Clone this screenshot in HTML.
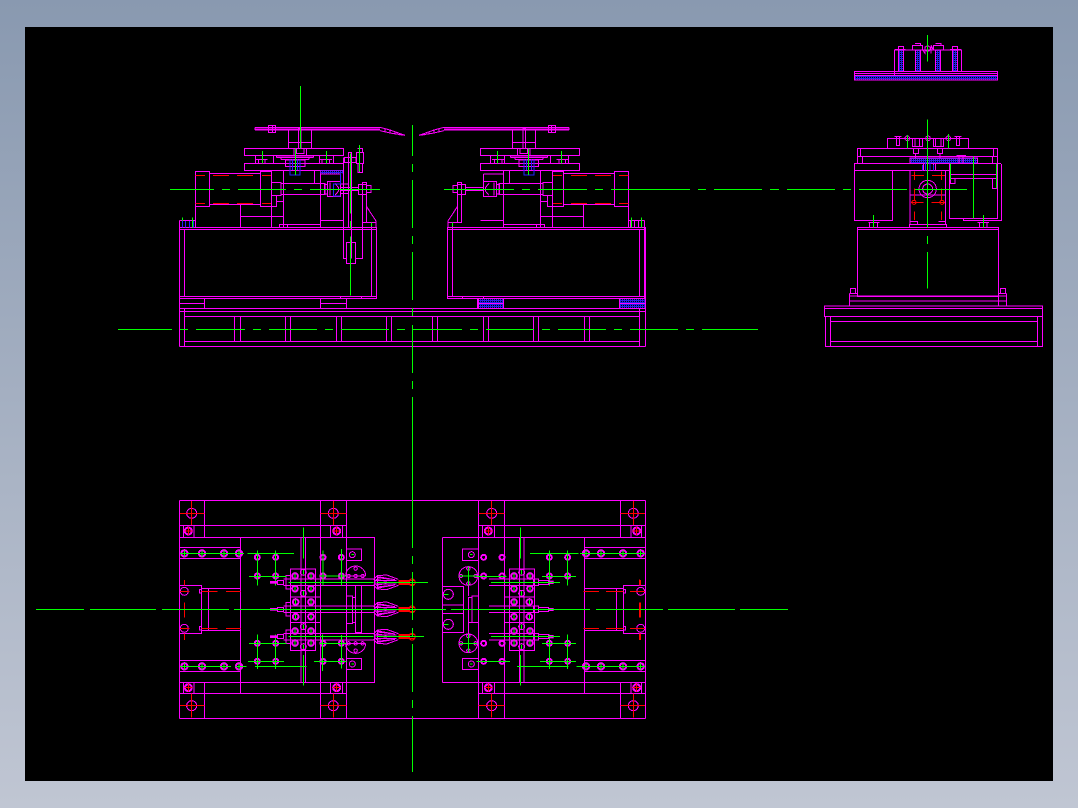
<!DOCTYPE html>
<html lang="en">
<head>
<meta charset="utf-8">
<title>CAD drawing</title>
<style>
html,body{margin:0;padding:0;width:1078px;height:808px;overflow:hidden;background:linear-gradient(180deg,#8999b0 0%,#c0c6d3 100%)}
#v{position:absolute;left:25px;top:27px;width:1028px;height:754px;background:#000}
svg{position:absolute;left:0;top:0;display:block}
svg *{vector-effect:non-scaling-stroke}
.m,.m *{stroke:#f0f;stroke-width:1;fill:none;shape-rendering:crispEdges}
.g,.g *{stroke:#0f0;stroke-width:1;fill:none;shape-rendering:crispEdges}
.r,.r *{stroke:#f00;stroke-width:1;fill:none;shape-rendering:crispEdges}
.b,.b *{stroke:#22f;stroke-width:1;fill:none;shape-rendering:crispEdges}
.h{fill:url(#ht);stroke:none;shape-rendering:crispEdges}
</style>
</head>
<body>
<div id="v"></div>
<svg width="1078" height="808" viewBox="0 0 1078 808" xmlns="http://www.w3.org/2000/svg">
<defs>
<pattern id="ht" width="6" height="6" patternUnits="userSpaceOnUse">
<rect width="6" height="6" fill="#2222e6"/><rect x="3" y="3" width="3" height="3" fill="#000"/>
</pattern>

<!-- shared side elevation, drawn in crop coordinates -->
<g id="side">
<path class="m" d="M255 52H630M255 60H630M255 57H630M255 52V60M630 52L660 60L705 76M630 62L665 70L705 76M645 55V67M660 60V71M675 66V74M690 70V76
M296 46H316V68H296ZM307 46V68M296 52H316M296 60H316
M355 60V115M425 60V115M355 97H425M385 52V115M393 52V115M385 55H395
M223 115H521V136H223ZM380 115V130H402V115M410 115V136M372 115V136
M256 136V160M310 136V160M448 136V160M490 136V160M258 149H292M450 149H486M265 149V160M285 149V160M456 149V160M478 149V160
M319 138H431M319 143H431M333 149H417M319 138V143M431 138V143M333 143V149M417 143V149
M346 150H405V170H346Z
M223 160H521V182H223Z
M76 184H119V290H76ZM119 190H271V284H119ZM271 184H305V290H271ZM76 290V352M211 284V352M305 182V352M211 320H340M305 290H320V257M320 275H340M305 217H333V257H305ZM333 220H465V254H333Z
M340 182V352M433 182V220M451 182V352M340 254V343M328 343H451V352H328ZM352 343V352M451 331H520M451 192H512M512 192V214
M472 214H512V260H472ZM480 217V257M495 220L505 232V244L495 256M463 224H472V252H463Z
M577 217H589V338H577ZM565 223H590V253H565ZM590 226H603V248H590ZM512 232H565M512 241H565
M590 290L618 333V352M578 337H620
M28 331H76M28 331V352M37 331V352M47 331V352M58 331V352M70 331V352
M28 352H620V566H28ZM28 358H620M28 560H620M44 358V560M604 337V560M511 560V566M575 560V566
M28 566V595M104 566V595M28 580H104M451 566V595M530 566V595M451 580H530"/>
<path class="r" d="M76 196H105M129 196H177M201 196H249M276 196H303M76 281H105M129 281H177M201 281H249M276 281H303"/>
<path class="b" d="M360 148V195H390V148M367 148V180M382 148V180"/>
<path class="g" d="M377 115V195M277 123V160M469 123V160M37 322V352M67 322V352M604 337V350"/>
</g>

<!-- shared plan frame -->
<g id="plan">
<path class="m" d="M28 16H750M28 670H750M28 16V670M28 91H530M28 595H530M28 127H530M28 562H530
M104 16V127M104 562V670M451 16V670M530 16V670M211 127V595
M40 91H72V127H40ZM481 91H518V127H481ZM40 562H72V595H40ZM481 562H518V595H481Z
M28 158H211M28 190H211M28 497H211M28 530H211
M28 271H95V416H28ZM95 280H211M95 406H211M115 280V406M88 284H95V294H88ZM88 395H95V405H88Z
M361 222H437V466H361ZM361 262H437M361 306H452M361 383H452M361 424H437M393 127V562M407 127V562"/>
<g class="m">
<circle cx="65" cy="55" r="15"/><circle cx="490" cy="55" r="15"/><circle cx="65" cy="632" r="15"/><circle cx="490" cy="632" r="15"/>
<circle cx="55" cy="108" r="12"/><circle cx="500" cy="108" r="12"/><circle cx="55" cy="578" r="12"/><circle cx="500" cy="578" r="12"/>
<circle cx="55" cy="108" r="9"/><circle cx="500" cy="108" r="9"/><circle cx="55" cy="578" r="9"/><circle cx="500" cy="578" r="9"/>
<circle cx="43" cy="175" r="11"/><circle cx="96" cy="175" r="11"/><circle cx="162" cy="175" r="11"/><circle cx="207" cy="175" r="11"/>
<circle cx="43" cy="514" r="11"/><circle cx="96" cy="514" r="11"/><circle cx="162" cy="514" r="11"/><circle cx="207" cy="514" r="11"/>
<circle cx="43" cy="175" r="8"/><circle cx="96" cy="175" r="8"/><circle cx="162" cy="175" r="8"/><circle cx="207" cy="175" r="8"/>
<circle cx="43" cy="514" r="8"/><circle cx="96" cy="514" r="8"/><circle cx="162" cy="514" r="8"/><circle cx="207" cy="514" r="8"/>
<circle cx="43" cy="289" r="12"/><circle cx="43" cy="400" r="12"/>
<circle cx="262" cy="187" r="9"/><circle cx="317" cy="187" r="9"/><circle cx="262" cy="243" r="9"/><circle cx="317" cy="243" r="9"/>
<circle cx="262" cy="445" r="9"/><circle cx="317" cy="445" r="9"/><circle cx="262" cy="499" r="9"/><circle cx="317" cy="499" r="9"/>
<circle cx="459" cy="187" r="9"/><circle cx="514" cy="187" r="9"/><circle cx="459" cy="243" r="9"/><circle cx="514" cy="243" r="9"/>
<circle cx="459" cy="445" r="9"/><circle cx="514" cy="445" r="9"/><circle cx="459" cy="499" r="9"/><circle cx="514" cy="499" r="9"/>
<circle cx="262" cy="187" r="6"/><circle cx="317" cy="187" r="6"/><circle cx="262" cy="243" r="6"/><circle cx="317" cy="243" r="6"/>
<circle cx="262" cy="445" r="6"/><circle cx="317" cy="445" r="6"/><circle cx="262" cy="499" r="6"/><circle cx="317" cy="499" r="6"/>
<circle cx="459" cy="187" r="6"/><circle cx="514" cy="187" r="6"/><circle cx="459" cy="243" r="6"/><circle cx="514" cy="243" r="6"/>
<circle cx="459" cy="445" r="6"/><circle cx="514" cy="445" r="6"/><circle cx="459" cy="499" r="6"/><circle cx="514" cy="499" r="6"/>
<circle cx="375" cy="243" r="10"/><circle cx="423" cy="243" r="10"/><circle cx="375" cy="281" r="10"/><circle cx="423" cy="281" r="10"/>
<circle cx="377" cy="321" r="10"/><circle cx="423" cy="321" r="10"/><circle cx="377" cy="365" r="10"/><circle cx="423" cy="365" r="10"/>
<circle cx="375" cy="408" r="10"/><circle cx="423" cy="408" r="10"/><circle cx="375" cy="444" r="10"/><circle cx="423" cy="444" r="10"/>
<circle cx="375" cy="243" r="7"/><circle cx="423" cy="243" r="7"/><circle cx="375" cy="281" r="7"/><circle cx="423" cy="281" r="7"/>
<circle cx="377" cy="321" r="7"/><circle cx="423" cy="321" r="7"/><circle cx="377" cy="365" r="7"/><circle cx="423" cy="365" r="7"/>
<circle cx="375" cy="408" r="7"/><circle cx="423" cy="408" r="7"/><circle cx="375" cy="444" r="7"/><circle cx="423" cy="444" r="7"/>
<circle cx="400" cy="232" r="9"/><circle cx="400" cy="295" r="9"/><circle cx="400" cy="395" r="9"/><circle cx="400" cy="455" r="9"/>
</g>
<path class="r" d="M30 55H104M65 18V90M451 55H530M490 18V90M30 632H104M65 596V668M451 632H530M490 596V668
M43 108H68M55 96V120M488 108H512M500 96V120M43 578H68M55 566V590M488 578H512M500 566V590
M95 289H143M168 289H211M95 400H143M168 400H211M30 289H58M43 255V272M43 322V368M30 400H58M43 415V435"/>
<path class="g" d="M43 166V184M96 166V184M162 166V184M207 166V184M43 505V523M96 505V523M162 505V523M207 505V523M262 166V272M317 166V272M262 418V522M317 418V522M375 236V250M423 236V250M375 274V288M423 274V288M377 314V328M423 314V328M377 358V372M423 358V372M375 401V415M423 401V415M375 437V451M423 437V451M400 225V239M400 288V302M400 388V402M400 448V462"/>
</g>

<!-- nozzle -->
<g id="noz">
<path d="M300 -4H322V4H300Z" fill="#f0f" stroke="none"/>
<path class="m" d="M610 -8L622 -20L650 -22L685 -9M610 8L622 20L650 22L685 9M622 -14L665 -9M622 14L665 9M622 -17L675 -8M622 17L675 8M618 -9L650 -3M618 9L650 3M612 -5H680M612 5H680M622 -20V20M615 -8V8M340 -10H610M340 10H610M322 -6H340V6H322ZM348 -20H362V20H348Z"/>
<path class="r" d="M685 -6H735M685 6H735M685 -3H720M685 3H720"/>
<g class="r"><circle cx="726" cy="0" r="10"/></g>
<path class="g" d="M620 0H742M355 0H610"/>
</g>
</defs>

<!-- LEFT ELEVATION -->
<g transform="translate(170,110) scale(.33333)">
<use href="#side"/>
<rect class="h" x="451" y="182" width="69" height="9"/>
<path class="m" d="M520 142V445H529M577 338V445H557M529 397H557V461H529ZM535 128H545V352H535ZM523 142H558V157H523ZM545 128V445M512 222H535M512 250H535
M559 127H581V160H559ZM564 160H577V188H564ZM562 115H577V127M568 160V188"/>
<path class="g" d="M391 -72V115M541 130V310M541 333V355M541 380V557M568 105V185"/>
<path class="b" d="M37 333V352M47 333V352M58 333V352M70 333V352M512 192V222H490V258H512"/>
</g>
<!-- RIGHT ELEVATION -->
<g transform="translate(654,110) scale(-.33333,.33333)">
<use href="#side"/>
</g>
<path class="m" d="M644 227.500H645.500V298.500H644M644 229.500H645.500M644 296.500H645.500"/>
<g transform="translate(410,110) scale(.33333)">
<rect class="h" x="206" y="567" width="75" height="27"/>
<rect class="h" x="629" y="567" width="78" height="27"/>
<path class="m" d="M205 580H281M628 580H707M205 566V595M281 566V595M628 566V595M707 566V595"/>
</g>

<!-- ELEVATION BASE -->
<g transform="translate(170,110) scale(.33333)">
<path class="m" d="M28 595H1427M28 604H1427M44 619H1408M44 694H1408M28 709H1427M28 595V709M44 595V709
M193 619V694M211 619V694M347 619V694M362 619V694M499 619V694M515 619V694M649 619V694M665 619V694
M787 619V694M803 619V694M940 619V694M956 619V694M1090 619V694M1105 619V694M1243 619V694M1259 619V694M1408 595V709M1427 595V709"/>
</g>

<!-- PLAN -->
<g transform="translate(170,495) scale(.33333)"><use href="#plan"/></g>
<g transform="translate(655,495) scale(-.33333,.33333)"><use href="#plan"/></g>

<!-- plan left-only -->
<g transform="translate(170,495) scale(.33333)">
<path class="m" d="M530 127H614V562H530M530 162H575V197H530M530 490H575V524H530M556 272H575V413H556ZM547 307H556V382H547ZM530 303H547V385H530"/>
<g class="m"><circle cx="547" cy="179" r="9"/><circle cx="547" cy="507" r="9"/><path d="M527 243A30 30 0 0 1 587 243M527 445A30 30 0 0 0 587 445M527 243H587M527 445H587"/>
<circle cx="536" cy="243" r="5"/><circle cx="557" cy="243" r="5"/><circle cx="578" cy="243" r="5"/><circle cx="536" cy="445" r="5"/><circle cx="557" cy="445" r="5"/><circle cx="578" cy="445" r="5"/><circle cx="557" cy="221" r="5"/><circle cx="557" cy="467" r="5"/></g>
<use href="#noz" transform="translate(0,262)"/>
<use href="#noz" transform="translate(0,343)"/>
<use href="#noz" transform="translate(0,425)"/>
<path class="g" d="M30 175H222M232 175H372M30 514H183M196 514H230M255 514H410M237 244H350M237 446H350M234 499H342M432 499H530M400 98V190M400 480V572M459 166V272M514 162V272M458 418V528M514 420V520M0 343H177M192 343H750M545 179H552M545 507H552M450 243H530M450 445H530"/>
</g>

<!-- plan right-only -->
<g transform="translate(410,495) scale(.33333)">
<path class="m" d="M97 127H205M97 562H205M97 127V562M157 162H205V197H157ZM157 490H205V524H157ZM97 274H160V330H97ZM97 356H160V413H97ZM160 330V356M176 308H186V382H176ZM186 303H205V383H186ZM175 272V303M175 383V415
M237 252H380M237 272H380M237 333H380M237 353H380M237 415H380M237 435H380M370 252H385V272H370ZM370 333H385V353H370ZM370 415H385V435H370ZM385 256H415V268H385ZM385 337H415V349H385ZM385 419H415V431H385Z"/>
<path d="M415 257H431V267H415ZM415 339H431V348H415ZM415 420H431V430H415Z" fill="#f0f" stroke="none"/>
<g class="m"><circle cx="184" cy="179" r="9"/><circle cx="184" cy="507" r="9"/><circle cx="175" cy="243" r="28"/><circle cx="175" cy="445" r="28"/><circle cx="115" cy="298" r="15"/><circle cx="115" cy="388" r="15"/><circle cx="175" cy="221" r="5"/><circle cx="175" cy="265" r="5"/><circle cx="175" cy="423" r="5"/><circle cx="175" cy="467" r="5"/><circle cx="153" cy="243" r="5"/><circle cx="197" cy="243" r="5"/><circle cx="153" cy="445" r="5"/><circle cx="197" cy="445" r="5"/></g>
<path class="g" d="M360 175H505M510 175H705M321 514H476M500 514H705M200 499H300M390 499H498M200 244H290M396 244H498M396 446H498M331 98V190M331 480V572M147 243H203M175 215V271M147 445H203M175 417V473M243 262H450M243 425H450M0 343H108M123 343H540M558 343H750M0 262H54M0 424H42M100 298H115M100 388H115M180 179H188M180 507H188"/>
<path class="r" d="M521 289H564M588 289H640M521 400H564M588 400H640M660 289H700M688 253V272M688 322V368M660 400H700M688 415V435"/>
</g>

<!-- RIGHT VIEW -->
<g transform="translate(815,30) scale(.33333)">
<rect class="h" x="118" y="136" width="430" height="14"/>
<rect class="h" x="250" y="62" width="15" height="62"/><rect class="h" x="302" y="62" width="14" height="62"/><rect class="h" x="362" y="62" width="14" height="62"/><rect class="h" x="412" y="62" width="15" height="62"/>
<rect class="h" x="287" y="386" width="200" height="13"/>
<path class="m" d="M118 124H548V150H118ZM118 130H548M118 136H548M238 60H440V124H238ZM238 124V136M250 60V124M265 60V124M302 60V124M316 60V124M362 60V124M376 60V124M412 60V124M427 60V124
M250 50H265V60H250ZM292 46H323V60H292ZM300 40H316V46M355 46H386V60H355ZM362 40H378V46M412 50H428V60H412ZM240 58H272M405 58H438M323 60L330 70V50M348 70V46L355 60
M217 325H461V355H217ZM127 355H548V380H127ZM137 355V380M535 355V380M238 320H260M244 320V346H254V320M418 320H440M424 320V346H434V320M292 325H323V350H292ZM355 325H386V350H355ZM300 325V350M314 325V350M362 325V350M378 325V350
M295 355H311V370H295ZM302 370V385M367 355H383V370H367ZM375 370V385M127 380H143V400H127ZM532 380H548V400H532ZM285 384H488V400H285ZM424 376H452V380M432 380V400M444 380V400
M118 400H404V422H118ZM404 400H558M118 422V572H233V422M403 400V566H548V400M445 566V572H560V402M407 434H544M407 445H544M407 445V460H420V445M544 445V475H532V445
M285 422H392V583H285ZM283 583H395V592H283ZM287 574H308V583M370 574H391V583M285 495H392M320 400H362V422M325 400V422M355 400V422
M160 577H193M163 577V592M187 577V592M488 577H522M493 577V592M516 577V592
M127 592H551V800H127ZM127 598H551M103 790H127M551 790H575M103 790V828M575 790V828M103 798H575M103 813H575M550 790V828M106 775H122V790H106ZM556 775H572V790H556Z
M28 828H683V859H28ZM28 835H683M31 859V950H683V859M47 859V950M667 859V950M47 874H667M47 934H667"/>
<g class="m"><circle cx="338" cy="56" r="8"/><circle cx="338" cy="477" r="26"/><circle cx="338" cy="477" r="15"/><circle cx="277" cy="325" r="7"/><circle cx="339" cy="325" r="7"/><circle cx="400" cy="325" r="7"/></g>
<g class="r"><circle cx="297" cy="517" r="6"/><circle cx="381" cy="517" r="6"/></g>
<path class="r" d="M290 436H327M351 436H390M298 425V450M380 425V450M298 475V510M380 475V510M298 545V570M380 545V570M288 517H325M350 517H390"/>
<path class="b" d="M322 405V422M332 395V422M345 395V422M355 405V422"/>
<path class="g" d="M337 15V95M337 268V592M337 618V642M337 666V776M475 380V566M407 400V450M544 400V475M175 555V592M505 555V592M277 315V355M400 312V355"/>
</g>

<!-- LONG CENTRE LINES -->
<path class="g" d="M412.500 125V156M412.500 164V172M412.500 180V228M412.500 236V244M412.500 252V300M412.500 308V316M412.500 325V373M412.500 381V389M412.500 397V548M412.500 556V564M412.500 572V620M412.500 628V636M412.500 644V692M412.500 700V708M412.500 716V772
M170 189.500H214M222 189.500H230M238 189.500H286M294 189.500H302M310 189.500H380
M444 189.500H514M522 189.500H530M538 189.500H587M595 189.500H603M611 189.500H690M698 189.500H706M714 189.500H762M770 189.500H779M787 189.500H835M843 189.500H851M859 189.500H907M915 189.500H967
M118 329.500H172M180 329.500H188M196 329.500H245M253 329.500H261M269 329.500H317M325 329.500H333M341 329.500H389M397 329.500H405M413 329.500H462M470 329.500H478M486 329.500H534M542 329.500H550M558 329.500H606M614 329.500H622M630 329.500H678M686 329.500H694M702 329.500H758
M36 609.500H84M90 609.500H156M162 609.500H229M640 609.500H663M668 609.500H735M740 609.500H788"/>
</svg>
</body>
</html>
